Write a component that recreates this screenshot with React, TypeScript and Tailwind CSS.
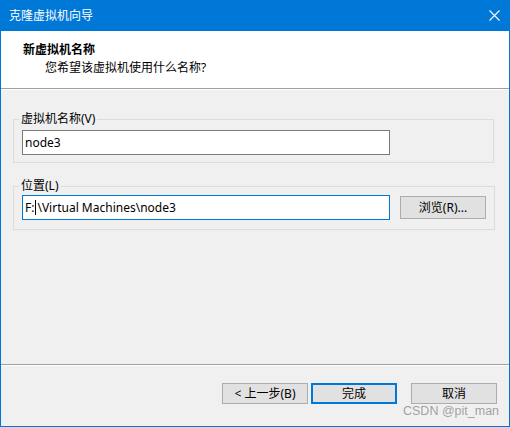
import React from 'react';

const uiFont = { fontFamily: '"Noto Sans", "Noto Sans CJK SC", sans-serif' };

const Button = ({ label, primary }: { label: string; primary?: boolean }) => (
  <button
    className={`w-[86px] h-[21px] flex items-center justify-center text-[12px] leading-none text-black bg-[#e1e1e1] ${
      primary ? 'border-2 border-[#0078d7]' : 'border border-[#adadad]'
    }`}
  >
    {label}
  </button>
);

const App = () => {
  return (
    <div className="relative w-[510px] h-[427px] flex flex-col bg-[#f0f0f0] border-x border-b border-[#0078d7] overflow-hidden" style={uiFont}>
      {/* Title bar */}
      <div className="h-[31px] -mx-px bg-[#0078d7] flex items-center justify-between pl-[9px] pr-[10px] shrink-0">
        <span className="text-white text-[12px] leading-[16px]">克隆虚拟机向导</span>
        <svg width="11" height="11" viewBox="0 0 11 11" className="mt-[-1px]">
          <path d="M0.5 0.5 L10.5 10.5 M10.5 0.5 L0.5 10.5" stroke="white" strokeWidth="1.1" />
        </svg>
      </div>

      {/* Header */}
      <div className="h-[57px] bg-white pt-[11px] pl-[22px] shrink-0">
        <p className="text-[12px] leading-[16px] font-bold text-black">新虚拟机名称</p>
        <p className="text-[12px] leading-[16px] text-black mt-[2px] pl-[22px]">您希望该虚拟机使用什么名称?</p>
      </div>
      <div className="h-px bg-[#a0a0a0] shrink-0" />
      <div className="h-px bg-white shrink-0" />

      {/* Body */}
      <div className="flex-1 pt-[21px] pl-[12px] pr-[15px] flex flex-col gap-[15px]">
        <fieldset className="border border-[#dcdcdc] px-[8px] pt-[3px] pb-[7px]">
          <legend className="-ml-[3px] px-[2px] text-[12px] leading-[16px] text-black">虚拟机名称(V)</legend>
          <div className="w-[368px] h-[25px] bg-white border border-[#7a7a7a] flex items-center pl-[2px] text-[12px] text-black">
            node3
          </div>
        </fieldset>

        <fieldset className="border border-[#dcdcdc] px-[8px] pt-[1px] pb-[9px]">
          <legend className="-ml-[3px] px-[2px] text-[12px] leading-[16px] text-black">位置(L)</legend>
          <div className="flex items-center gap-[10px]">
            <div className="w-[368px] h-[25px] bg-white border border-[#0078d7] flex items-center pl-[2px] text-[12px] text-black">
              <span>F:</span>
              <span className="w-px h-[15px] bg-black ml-[1px] mr-[1px]" />
              <span>\Virtual Machines\node3</span>
            </div>
            <button className="w-[86px] h-[23px] bg-[#e1e1e1] border border-[#adadad] text-[12px] leading-none text-black flex items-center justify-center">
              浏览(R)...
            </button>
          </div>
        </fieldset>
      </div>

      <div className="h-px bg-[#a0a0a0] shrink-0" />
      <div className="h-px bg-white shrink-0" />

      {/* Footer */}
      <div className="h-[60px] shrink-0 flex justify-end items-start pt-[17px] pr-[12px]">
        <div className="flex gap-[3px]">
          <Button label="< 上一步(B)" />
          <Button label="完成" primary />
        </div>
        <div className="ml-[14px]">
          <Button label="取消" />
        </div>
      </div>

      {/* watermark */}
      <span
        className="absolute left-[402px] top-[403px] text-[12.5px] leading-[16px] text-[#8c8c8c]/80 pointer-events-none"
        style={{ fontFamily: '"Liberation Sans", Arial, sans-serif' }}
      >
        CSDN @pit_man
      </span>
    </div>
  );
};

export default App;
